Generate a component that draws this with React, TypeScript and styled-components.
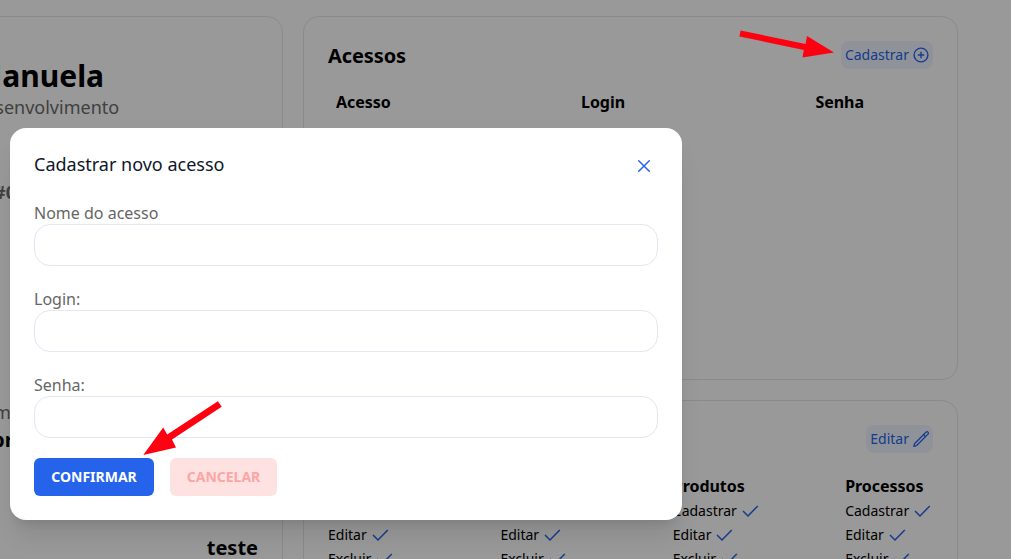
import React from "react";
import styled, { createGlobalStyle } from "styled-components";
import { IoCloseOutline } from "react-icons/io5";

const GlobalStyle = createGlobalStyle`
  * { box-sizing: border-box; }
  body {
    margin: 0;
    overflow: hidden;
    background: #fff;
    color: #000;
    font-family: "Noto Sans", sans-serif;
    font-size: 16px;
    line-height: 24px;
  }
  h1, h2, h3, p { margin: 0; }
`;

const Page = styled.main`
  display: flex;
  gap: 20px;
  height: 559px;
  padding: 16px 53px 0 0;
  overflow: hidden;
`;

const Card = styled.section`
  flex: none;
  border: 1px solid #e2e8f0;
  border-radius: 16px;
  padding: 24px;
`;

const ProfileCard = styled(Card)`
  display: flex;
  flex-direction: column;
  width: 383px;
  height: 700px;
  margin-left: -100px;
  padding: 39px 24px 24px 71px;
`;

const Name = styled.h1`
  padding-left: 2px;
  font-size: 30px;
  font-weight: 700;
  line-height: 39px;
`;

const Muted = styled.p<{ $bold?: boolean; $top?: number; $indent?: number }>`
  color: #6b6b6b;
  font-size: 18px;
  line-height: 24px;
  font-weight: ${(p) => (p.$bold ? 700 : 400)};
  margin-top: ${(p) => p.$top ?? 0}px;
  padding-left: ${(p) => p.$indent ?? 0}px;
`;

const Strong = styled.p<{ $end?: boolean; $top?: number; $indent?: number }>`
  font-size: 20px;
  line-height: 28px;
  font-weight: 700;
  text-align: ${(p) => (p.$end ? "right" : "left")};
  margin-top: ${(p) => p.$top ?? 0}px;
  padding-left: ${(p) => p.$indent ?? 0}px;
`;

const RightColumn = styled.div`
  display: flex;
  flex-direction: column;
  gap: 20px;
  width: 655px;
  flex: none;
`;

const AccessCard = styled(Card)`
  height: 364px;
`;

const PermissionsCard = styled(Card)`
  height: 260px;
`;

const CardHeader = styled.header`
  display: flex;
  align-items: center;
  justify-content: space-between;
  height: 28px;
`;

const CardTitle = styled.h2`
  font-size: 20px;
  line-height: 28px;
  font-weight: 700;
  letter-spacing: -0.1px;
  padding-top: 2px;
`;

const PillButton = styled.button`
  display: flex;
  align-items: center;
  gap: 2px;
  height: 28px;
  padding: 0 2px 0 4px;
  border: 0;
  border-radius: 8px;
  background: #eff6ff;
  color: #2563eb;
  font: inherit;
  font-size: 14px;
`;

const AccessHeadings = styled.div`
  display: grid;
  grid-template-columns: 245px 234.5px 1fr;
  margin-top: 21px;
  padding-left: 8px;
  font-weight: 700;
  letter-spacing: -0.05px;
`;

const PermissionGrid = styled.div`
  display: grid;
  grid-template-columns: repeat(4, 172.4px);
  margin-top: 21px;
`;

const GroupTitle = styled.h3`
  font-size: 16px;
  line-height: 24px;
  font-weight: 700;
  letter-spacing: -0.05px;
  margin-bottom: 1px;
`;

const Permission = styled.p`
  display: flex;
  align-items: center;
  gap: 4px;
  height: 24px;
  font-size: 14px;
`;

const Overlay = styled.div`
  position: absolute;
  inset: 0;
  background: rgba(0, 0, 0, 0.4);
`;

const Dialog = styled.div`
  position: absolute;
  left: 10px;
  top: 128px;
  width: 672px;
  height: 392px;
  padding: 24px;
  border-radius: 16px;
  background: #fff;
  box-shadow: 0 20px 25px -5px rgba(0, 0, 0, 0.1), 0 8px 10px -6px rgba(0, 0, 0, 0.1);
`;

const DialogHeader = styled.header`
  display: flex;
  align-items: center;
  justify-content: space-between;
  height: 28px;
  margin-bottom: 21px;
  padding-right: 2px;
`;

const DialogTitle = styled.h2`
  color: #0f172a;
  font-size: 18px;
  line-height: 24px;
  font-weight: 400;
  margin-top: -4px;
`;

const CloseButton = styled.button`
  display: flex;
  border: 0;
  padding: 0;
  background: none;
  color: #2563eb;
  font-size: 24px;
`;

const Field = styled.label`
  display: block;
  height: 86px;
  color: #666;
`;

const Input = styled.input`
  display: block;
  width: 100%;
  height: 42px;
  margin-top: -1px;
  padding: 0 12px;
  border: 1px solid #e2e8f0;
  border-radius: 16px;
  background: #fff;
  outline: none;
  font: inherit;
`;

const Actions = styled.div`
  display: flex;
  gap: 16px;
  margin-top: -1px;
`;

const ActionButton = styled.button<{ $tone: "primary" | "danger" }>`
  width: ${(p) => (p.$tone === "primary" ? 120 : 107)}px;
  height: 38px;
  padding: 0;
  border: 0;
  border-radius: 6px;
  background: ${(p) => (p.$tone === "primary" ? "#2563eb" : "#fee2e2")};
  color: ${(p) => (p.$tone === "primary" ? "#fff" : "#fca5a5")};
  font: 700 14px/20px "Noto Sans", sans-serif;
`;

const Annotations = styled.svg`
  position: absolute;
  inset: 0;
  pointer-events: none;
`;

const CheckIcon = () => (
  <svg width="20" height="20" viewBox="0 0 20 20" fill="none" stroke="#2563eb" strokeWidth="1.5">
    <path d="M2 10 7 15 16.8 4.9" />
  </svg>
);

const PlusCircleIcon = () => (
  <svg width="20" height="20" viewBox="0 0 20 20" fill="none" stroke="currentColor" strokeWidth="1.4">
    <circle cx="10" cy="10" r="6.9" />
    <path d="M10 6.8v6.4M6.8 10h6.4" />
  </svg>
);

const PencilIcon = () => (
  <svg
    width="20"
    height="20"
    viewBox="-1.4 -1.4 26.6 26.6"
    fill="none"
    stroke="currentColor"
    strokeWidth="1.75"
    strokeLinecap="round"
    strokeLinejoin="round"
  >
    <path d="m16.862 4.487 1.687-1.688a1.875 1.875 0 1 1 2.652 2.652L6.832 19.82a4.5 4.5 0 0 1-1.897 1.13l-2.685.8.8-2.685a4.5 4.5 0 0 1 1.13-1.897L16.863 4.487Z" />
    <path d="m15.2 6.1 2.7 2.7" />
  </svg>
);

const groups = ["Usuários", "Clientes", "Produtos", "Processos"];
const permissions = ["Cadastrar", "Editar", "Excluir"];
const fields = ["Nome do acesso", "Login:", "Senha:"];

export default function App() {
  return (
    <>
      <GlobalStyle />
      <Page>
        <ProfileCard>
          <Name>Manuela</Name>
          <Muted>Desenvolvimento</Muted>
          <Muted $bold $top={61} $indent={22}>#01</Muted>
          <Muted $top={196} $indent={22}>mail</Muted>
          <Strong $top={2} $indent={20}>br</Strong>
          <Strong $end $top={80}>teste</Strong>
        </ProfileCard>
        <RightColumn>
          <AccessCard>
            <CardHeader>
              <CardTitle>Acessos</CardTitle>
              <PillButton>Cadastrar <PlusCircleIcon /></PillButton>
            </CardHeader>
            <AccessHeadings>
              <span>Acesso</span>
              <span>Login</span>
              <span>Senha</span>
            </AccessHeadings>
          </AccessCard>
          <PermissionsCard>
            <CardHeader>
              <CardTitle>Permissões</CardTitle>
              <PillButton>Editar <PencilIcon /></PillButton>
            </CardHeader>
            <PermissionGrid>
              {groups.map((group) => (
                <div key={group}>
                  <GroupTitle>{group}</GroupTitle>
                  {permissions.map((name) => (
                    <Permission key={name}>{name} <CheckIcon /></Permission>
                  ))}
                </div>
              ))}
            </PermissionGrid>
          </PermissionsCard>
        </RightColumn>
      </Page>
      <Overlay />
      <Dialog role="dialog">
        <DialogHeader>
          <DialogTitle>Cadastrar novo acesso</DialogTitle>
          <CloseButton aria-label="Fechar"><IoCloseOutline /></CloseButton>
        </DialogHeader>
        {fields.map((field) => (
          <Field key={field}>{field}<Input /></Field>
        ))}
        <Actions>
          <ActionButton $tone="primary">CONFIRMAR</ActionButton>
          <ActionButton $tone="danger">CANCELAR</ActionButton>
        </Actions>
      </Dialog>
      <Annotations width="1011" height="559" fill="#ff0010">
        <path d="M740.6 30.5 739.4 36.4 803.8 50 802.5 57.5 834 52.5 807 36 805.5 43.9Z" />
        <path d="M217.9 401.3 221.7 406.7 172 439.5 176 447.5 143.3 455 163.2 427.6 167.2 434.6Z" />
      </Annotations>
    </>
  );
}
